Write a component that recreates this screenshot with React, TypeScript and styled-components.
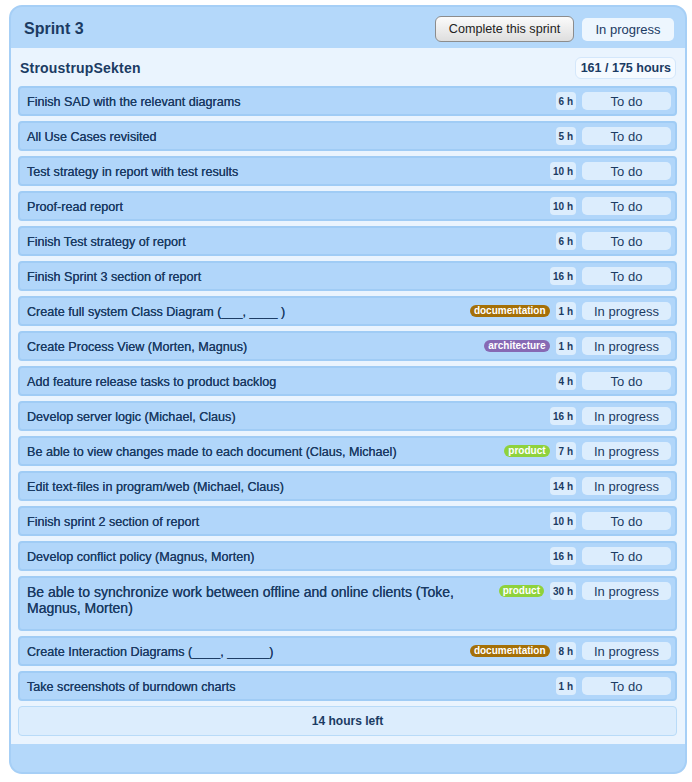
import React from "react";
import styled, { createGlobalStyle } from "styled-components";

type Status = "To do" | "In progress";
type Tag = "documentation" | "architecture" | "product";

interface Task {
  title: string;
  hours: number;
  status: Status;
  tag?: Tag;
  long?: boolean;
}

const tasks: Task[] = [
  { title: "Finish SAD with the relevant diagrams", hours: 6, status: "To do" },
  { title: "All Use Cases revisited", hours: 5, status: "To do" },
  { title: "Test strategy in report with test results", hours: 10, status: "To do" },
  { title: "Proof-read report", hours: 10, status: "To do" },
  { title: "Finish Test strategy of report", hours: 6, status: "To do" },
  { title: "Finish Sprint 3 section of report", hours: 16, status: "To do" },
  {
    title: "Create full system Class Diagram (___, ____ )",
    hours: 1,
    status: "In progress",
    tag: "documentation"
  },
  {
    title: "Create Process View (Morten, Magnus)",
    hours: 1,
    status: "In progress",
    tag: "architecture"
  },
  { title: "Add feature release tasks to product backlog", hours: 4, status: "To do" },
  { title: "Develop server logic (Michael, Claus)", hours: 16, status: "In progress" },
  {
    title: "Be able to view changes made to each document (Claus, Michael)",
    hours: 7,
    status: "In progress",
    tag: "product"
  },
  { title: "Edit text-files in program/web (Michael, Claus)", hours: 14, status: "In progress" },
  { title: "Finish sprint 2 section of report", hours: 10, status: "To do" },
  { title: "Develop conflict policy (Magnus, Morten)", hours: 16, status: "To do" },
  {
    title:
      "Be able to synchronize work between offline and online clients (Toke, Magnus, Morten)",
    hours: 30,
    status: "In progress",
    tag: "product",
    long: true
  },
  {
    title: "Create Interaction Diagrams (____, ______)",
    hours: 8,
    status: "In progress",
    tag: "documentation"
  },
  { title: "Take screenshots of burndown charts", hours: 1, status: "To do" }
];

const tagColors: Record<Tag, string> = {
  documentation: "#a56f06",
  architecture: "#8769b4",
  product: "#8fd23c"
};

const GlobalStyle = createGlobalStyle`
  body {
    margin: 0;
    background: #ffffff;
    font-family: "Liberation Sans", Arial, sans-serif;
  }
`;

const Page = styled.div`
  padding: 5px 5px 8px 9px;
`;

const Panel = styled.div`
  width: 678px;
  box-sizing: border-box;
  background: #b4d8fa;
  border: 2px solid #a6cff6;
  border-radius: 13px;
  padding-bottom: 28px;
`;

const Header = styled.div`
  display: flex;
  align-items: center;
  height: 41px;
  padding: 0 11px 0 13px;
`;

const SprintTitle = styled.div`
  flex: 1;
  font-size: 16px;
  font-weight: bold;
  color: #1b3b63;
  padding-top: 2px;
`;

const CompleteButton = styled.button`
  height: 26px;
  width: 139px;
  padding: 0;
  margin-right: 8px;
  margin-top: 3px;
  font-family: "Liberation Sans", Arial, sans-serif;
  font-size: 12.6px;
  color: #222;
  border: 1px solid #8c8c8c;
  border-radius: 6px;
  background: linear-gradient(#fbfbfb, #dedede);
`;

const StatusPill = styled.div<{ $h: number; $w: number }>`
  display: flex;
  align-items: center;
  justify-content: center;
  width: ${p => p.$w}px;
  height: ${p => p.$h}px;
  box-sizing: border-box;
  background: #dcedfd;
  border-radius: 5px;
  font-size: 13px;
  color: #1b3b63;
  flex-shrink: 0;
`;

const HeaderStatus = styled(StatusPill)`
  background: #edf6fe;
  margin-top: 3px;
`;

const Body = styled.div`
  background: #eaf4fe;
  padding: 0 8px 8px 7px;
`;

const TeamRow = styled.div`
  display: flex;
  align-items: center;
  height: 38px;
  padding-left: 2px;
`;

const TeamName = styled.div`
  flex: 1;
  font-size: 14px;
  font-weight: bold;
  color: #1b3b63;
  letter-spacing: 0.2px;
  padding-top: 1px;
`;

const HoursTotal = styled.div`
  height: 22px;
  box-sizing: border-box;
  padding: 0 4px 0 5px;
  display: flex;
  align-items: center;
  background: #f5faff;
  border: 1px solid #d4e7fb;
  border-radius: 6px;
  font-size: 12.5px;
  font-weight: bold;
  color: #1b3b63;
  margin-right: 1px;
  margin-top: 2px;
`;

const TaskList = styled.div`
  display: flex;
  flex-direction: column;
  gap: 5px;
`;

const TaskRow = styled.div<{ $long?: boolean }>`
  display: flex;
  align-items: flex-start;
  gap: 6px;
  box-sizing: border-box;
  height: ${p => (p.$long ? 55 : 30)}px;
  padding: 4px 4px 4px 7px;
  background: #b1d6fa;
  border: 2px solid #a0ccf5;
  border-radius: 4px;
`;

const TaskTitle = styled.div<{ $long?: boolean }>`
  flex: 1;
  font-size: ${p => (p.$long ? 14 : 12.6)}px;
  line-height: 16px;
  padding-top: 2px;
  color: #1b3b63;
  text-shadow: 0 0 0.4px #1b3b63;
`;

const TagLabel = styled.div<{ $color: string }>`
  margin-top: 3px;
  height: 12px;
  line-height: 12px;
  padding: 0 4px;
  border-radius: 6px;
  background: ${p => p.$color};
  color: #fff;
  font-size: 10px;
  font-weight: bold;
  flex-shrink: 0;
`;

const HoursBadge = styled.div`
  height: 18px;
  min-width: 20px;
  box-sizing: border-box;
  padding: 0 3px;
  display: flex;
  align-items: center;
  justify-content: center;
  background: #dcedfd;
  border-radius: 4px;
  font-size: 10px;
  font-weight: bold;
  color: #1b3b63;
  flex-shrink: 0;
`;

const HoursLeft = styled.div`
  margin-top: 5px;
  height: 30px;
  box-sizing: border-box;
  display: flex;
  align-items: center;
  justify-content: center;
  background: #dcedfd;
  border: 1px solid #b9dbf8;
  border-radius: 4px;
  font-size: 12px;
  font-weight: bold;
  color: #1b3b63;
`;

const TaskItem: React.FC<{ task: Task }> = ({ task }) => (
  <TaskRow $long={task.long}>
    <TaskTitle $long={task.long}>{task.title}</TaskTitle>
    {task.tag && <TagLabel $color={tagColors[task.tag]}>{task.tag}</TagLabel>}
    <HoursBadge>{task.hours} h</HoursBadge>
    <StatusPill $h={18} $w={89}>
      {task.status}
    </StatusPill>
  </TaskRow>
);

export default function App() {
  const total = tasks.reduce((sum, t) => sum + t.hours, 0);
  return (
    <Page>
      <GlobalStyle />
      <Panel>
        <Header>
          <SprintTitle>Sprint 3</SprintTitle>
          <CompleteButton>Complete this sprint</CompleteButton>
          <HeaderStatus $h={23} $w={92}>
            In progress
          </HeaderStatus>
        </Header>
        <Body>
          <TeamRow>
            <TeamName>StroustrupSekten</TeamName>
            <HoursTotal>{total} / 175 hours</HoursTotal>
          </TeamRow>
          <TaskList>
            {tasks.map((t, i) => (
              <TaskItem key={i} task={t} />
            ))}
          </TaskList>
          <HoursLeft>14 hours left</HoursLeft>
        </Body>
      </Panel>
    </Page>
  );
}
